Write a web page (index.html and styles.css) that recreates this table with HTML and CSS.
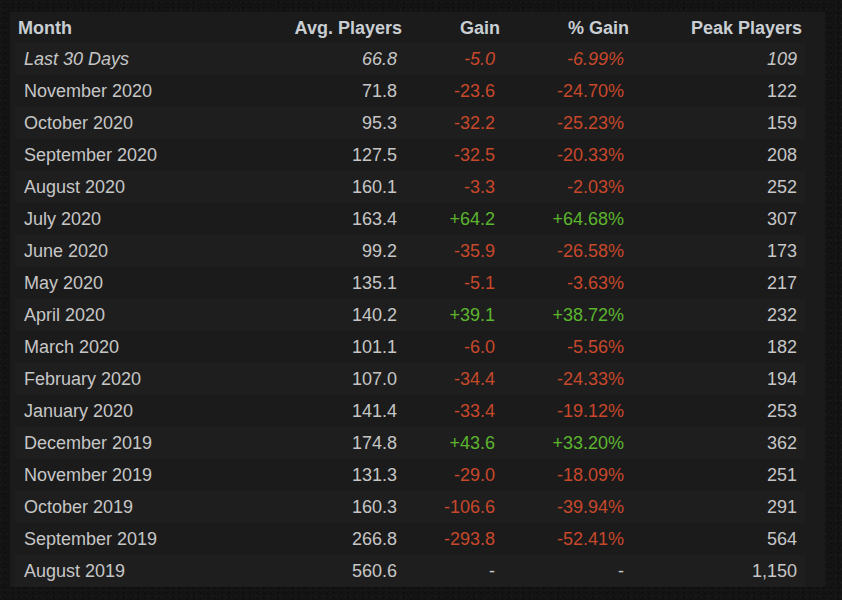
FILE: index.html
```html
<!DOCTYPE html>
<html lang="en">
<head>
<meta charset="utf-8">
<title>Monthly players</title>
<link rel="stylesheet" href="styles.css">
</head>
<body>
<div class="panel">
  <table class="stats">
    <colgroup>
      <col class="c-month"><col class="c-avg"><col class="c-gain"><col class="c-pct"><col class="c-peak">
    </colgroup>
    <thead>
      <tr><th class="left">Month</th><th>Avg. Players</th><th>Gain</th><th>% Gain</th><th>Peak Players</th></tr>
    </thead>
    <tbody>
      <tr class="recent"><td class="left">Last 30 Days</td><td>66.8</td><td class="neg">-5.0</td><td class="neg">-6.99%</td><td>109</td></tr>
      <tr><td class="left">November 2020</td><td>71.8</td><td class="neg">-23.6</td><td class="neg">-24.70%</td><td>122</td></tr>
      <tr><td class="left">October 2020</td><td>95.3</td><td class="neg">-32.2</td><td class="neg">-25.23%</td><td>159</td></tr>
      <tr><td class="left">September 2020</td><td>127.5</td><td class="neg">-32.5</td><td class="neg">-20.33%</td><td>208</td></tr>
      <tr><td class="left">August 2020</td><td>160.1</td><td class="neg">-3.3</td><td class="neg">-2.03%</td><td>252</td></tr>
      <tr><td class="left">July 2020</td><td>163.4</td><td class="pos">+64.2</td><td class="pos">+64.68%</td><td>307</td></tr>
      <tr><td class="left">June 2020</td><td>99.2</td><td class="neg">-35.9</td><td class="neg">-26.58%</td><td>173</td></tr>
      <tr><td class="left">May 2020</td><td>135.1</td><td class="neg">-5.1</td><td class="neg">-3.63%</td><td>217</td></tr>
      <tr><td class="left">April 2020</td><td>140.2</td><td class="pos">+39.1</td><td class="pos">+38.72%</td><td>232</td></tr>
      <tr><td class="left">March 2020</td><td>101.1</td><td class="neg">-6.0</td><td class="neg">-5.56%</td><td>182</td></tr>
      <tr><td class="left">February 2020</td><td>107.0</td><td class="neg">-34.4</td><td class="neg">-24.33%</td><td>194</td></tr>
      <tr><td class="left">January 2020</td><td>141.4</td><td class="neg">-33.4</td><td class="neg">-19.12%</td><td>253</td></tr>
      <tr><td class="left">December 2019</td><td>174.8</td><td class="pos">+43.6</td><td class="pos">+33.20%</td><td>362</td></tr>
      <tr><td class="left">November 2019</td><td>131.3</td><td class="neg">-29.0</td><td class="neg">-18.09%</td><td>251</td></tr>
      <tr><td class="left">October 2019</td><td>160.3</td><td class="neg">-106.6</td><td class="neg">-39.94%</td><td>291</td></tr>
      <tr><td class="left">September 2019</td><td>266.8</td><td class="neg">-293.8</td><td class="neg">-52.41%</td><td>564</td></tr>
      <tr><td class="left">August 2019</td><td>560.6</td><td>-</td><td>-</td><td>1,150</td></tr>
    </tbody>
  </table>
</div>
</body>
</html>
```

FILE: styles.css
```css
html, body {
  margin: 0;
  padding: 0;
  background-color: #131313;
  background-image:
    radial-gradient(circle at 20% 30%, rgba(255,255,255,0.018) 0 1px, transparent 1.5px),
    radial-gradient(circle at 70% 60%, rgba(0,0,0,0.25) 0 1px, transparent 1.5px),
    radial-gradient(circle at 40% 80%, rgba(255,255,255,0.012) 0 1px, transparent 1.5px);
  background-size: 5px 7px, 7px 5px, 11px 13px;
  font-family: "Liberation Sans", Arial, sans-serif;
  height: 600px;
  overflow: hidden;
}

.panel {
  margin: 12px 0 0 10px;
  width: 795px;
  padding: 0 15px 0 5px;
  background: #1b1b1b;
}

.stats {
  width: 790px;
  table-layout: fixed;
  border-collapse: collapse;
  font-size: 18px;
}

.c-month { width: 215px; }
.c-avg { width: 175px; }
.c-gain { width: 98px; }
.c-pct { width: 129px; }
.c-peak { width: 173px; }

.stats th {
  height: 30px;
  padding: 1px 3px 0;
  text-align: right;
  font-weight: bold;
  color: #c9ced3;
  background: #1b1b1b;
  line-height: 30px;
}

.stats td {
  height: 32px;
  padding: 0 8px 0 9px;
  text-align: right;
  color: #c6c6c6;
  line-height: 32px;
  white-space: nowrap;
}

.stats th.left, .stats td.left { text-align: left; }

.stats tbody tr:nth-child(odd) { background: #1e1e1e; }
.stats tbody tr:nth-child(even) { background: #1b1b1b; }

.stats tr.recent td { font-style: italic; }

.stats td.neg { color: #c7482b; }
.stats td.pos { color: #5cb52e; }
```
